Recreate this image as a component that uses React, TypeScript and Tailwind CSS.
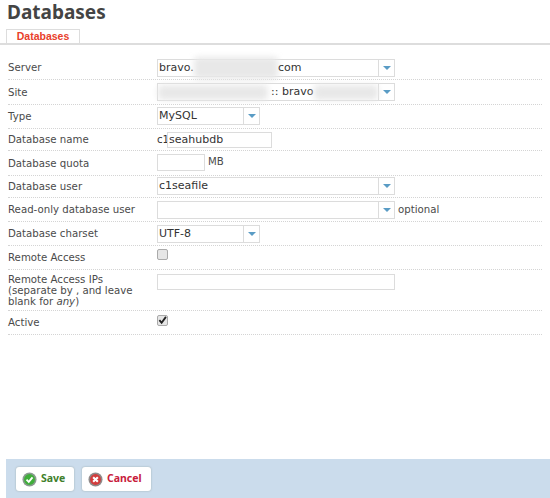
import type { ReactNode } from "react";

function Row({ label, h, children }: { label: ReactNode; h: string; children?: ReactNode }) {
  return (
    <div className={`grid grid-cols-[149px_1fr] items-center border-b border-dotted border-[#d4d4d4] ${h}`}>
      <div className="text-[#4a4a4a] leading-[11px]">{label}</div>
      <div className="flex items-center min-w-0">{children}</div>
    </div>
  );
}

function Select({ value, wide, children }: { value?: string; wide?: boolean; children?: ReactNode }) {
  return (
    <div className={`relative flex h-[18px] border border-[#dcdcdc] bg-white ${wide ? "w-[238px]" : "w-[103px]"}`}>
      <div className="flex-1 pl-[1px] text-[11px] leading-[16px] text-[#333]">{value}</div>
      <div className="flex w-[16px] items-center justify-center border-l border-[#dcdcdc]">
        <div className="h-0 w-0 border-x-[4px] border-t-[4px] border-x-transparent border-t-[#5a9cc5]" />
      </div>
      {children}
    </div>
  );
}

function Checkbox({ checked, mb }: { checked?: boolean; mb: string }) {
  return (
    <div className={`flex h-[11px] w-[11px] items-center justify-center rounded-[2px] border border-[#aaa] bg-[#e6e6e6] ${mb}`}>
      {checked && (
        <svg viewBox="0 0 10 10" className="h-[10px] w-[10px]">
          <path d="M1.5 5.2 L4 8 L8.8 1.5" fill="none" stroke="#222" strokeWidth="2" />
        </svg>
      )}
    </div>
  );
}

function Blob({ className }: { className: string }) {
  return <div className={`absolute rounded-sm bg-[#e8e8e8] blur-[3px] ${className}`} />;
}

export default function App() {
  return (
    <div className="flex h-[498px] w-[550px] flex-col overflow-hidden bg-white font-['DejaVu_Sans',sans-serif] text-[10.2px]">
      <h1 className="pl-[7px] font-['Noto_Sans',sans-serif] text-[19px] font-bold leading-[25px] text-[#444]">Databases</h1>

      <div className="mt-[4px] h-[16px] border-b-2 border-[#ddd] pl-[6px]">
        <div className="flex h-[15px] w-[74px] items-center justify-center border border-[#ddd] bg-white font-['Liberation_Sans',sans-serif] text-[10.5px] font-bold text-[#e8402a]">
          Databases
        </div>
      </div>

      <div className="mt-[11px] flex-1 px-[8px]">
        <Row label="Server" h="h-[24px]">
          <Select value="bravo." wide>
            <Blob className="left-[36px] top-[-3px] h-[22px] w-[84px]" />
            <span className="absolute left-[120px] top-0 text-[11px] leading-[16px] text-[#333]">com</span>
          </Select>
        </Row>
        <Row label="Site" h="h-[25px]">
          <Select wide>
            <Blob className="left-0 top-[1px] h-[15px] w-[110px]" />
            <span className="absolute left-[113px] top-0 text-[11px] leading-[16px] text-[#333]">:: bravo</span>
            <Blob className="left-[156px] top-[1px] h-[15px] w-[64px]" />
          </Select>
        </Row>
        <Row label="Type" h="h-[24px]">
          <div className="mb-[2px]">
            <Select value="MySQL" />
          </div>
        </Row>
        <Row label="Database name" h="h-[22px]">
          <span className="w-[10px] shrink-0 overflow-visible whitespace-nowrap text-[10.2px] text-[#333]">c1</span>
          <div className="h-[16px] w-[105px] border border-[#dcdcdc] bg-white pl-[1px] text-[11px] leading-[14px] text-[#333]">seahubdb</div>
        </Row>
        <Row label="Database quota" h="h-[25px]">
          <div className="h-[17px] w-[48px] border border-[#dcdcdc]" />
          <span className="mb-[3px] ml-[3px] text-[#4a4a4a]">MB</span>
        </Row>
        <Row label="Database user" h="h-[22px]">
          <div className="mb-[2px]">
            <Select value="c1seafile" wide />
          </div>
        </Row>
        <Row label="Read-only database user" h="h-[24px]">
          <Select wide />
          <span className="ml-[3px] text-[#4a4a4a]">optional</span>
        </Row>
        <Row label="Database charset" h="h-[24px]">
          <Select value="UTF-8" />
        </Row>
        <Row label="Remote Access" h="h-[24px]">
          <Checkbox mb="mb-[6px]" />
        </Row>
        <Row
          label={
            <>
              Remote Access IPs
              <br />
              (separate by , and leave
              <br />
              blank for <i>any</i>)
            </>
          }
          h="h-[41px]"
        >
          <div className="mb-[17px] h-[16px] w-[238px] border border-[#dcdcdc]" />
        </Row>
        <Row label="Active" h="h-[24px]">
          <Checkbox checked mb="mb-[5px]" />
        </Row>
      </div>

      <div className="ml-[6px] flex h-[39px] items-center gap-[8px] bg-[#cbdcec] pl-[10px] pt-[1px] font-['Noto_Sans',sans-serif] text-[10.5px] font-bold">
        <button className="flex h-[24px] w-[58px] items-center gap-[4px] rounded-[3px] bg-white pl-[6px] text-[#3f7f2c] shadow-[0_0_2px_#9aa]">
          <svg viewBox="0 0 16 16" className="h-[15px] w-[15px]">
            <circle cx="8" cy="8" r="7.5" fill="#8a9a90" />
            <circle cx="8" cy="8" r="5.8" fill="#3fae3a" />
            <path d="M4.8 8.2 L7.2 10.6 L11.2 5.8" fill="none" stroke="#fff" strokeWidth="2" />
          </svg>
          Save
        </button>
        <button className="flex h-[24px] w-[69px] items-center gap-[4px] rounded-[3px] bg-white pl-[6px] text-[#c8203c] shadow-[0_0_2px_#9aa]">
          <svg viewBox="0 0 16 16" className="h-[15px] w-[15px]">
            <circle cx="8" cy="8" r="7.5" fill="#8f8a8a" />
            <circle cx="8" cy="8" r="5.8" fill="#d23c3c" />
            <path d="M5.5 5.5 L10.5 10.5 M10.5 5.5 L5.5 10.5" fill="none" stroke="#fff" strokeWidth="2.2" />
          </svg>
          Cancel
        </button>
      </div>
    </div>
  );
}
